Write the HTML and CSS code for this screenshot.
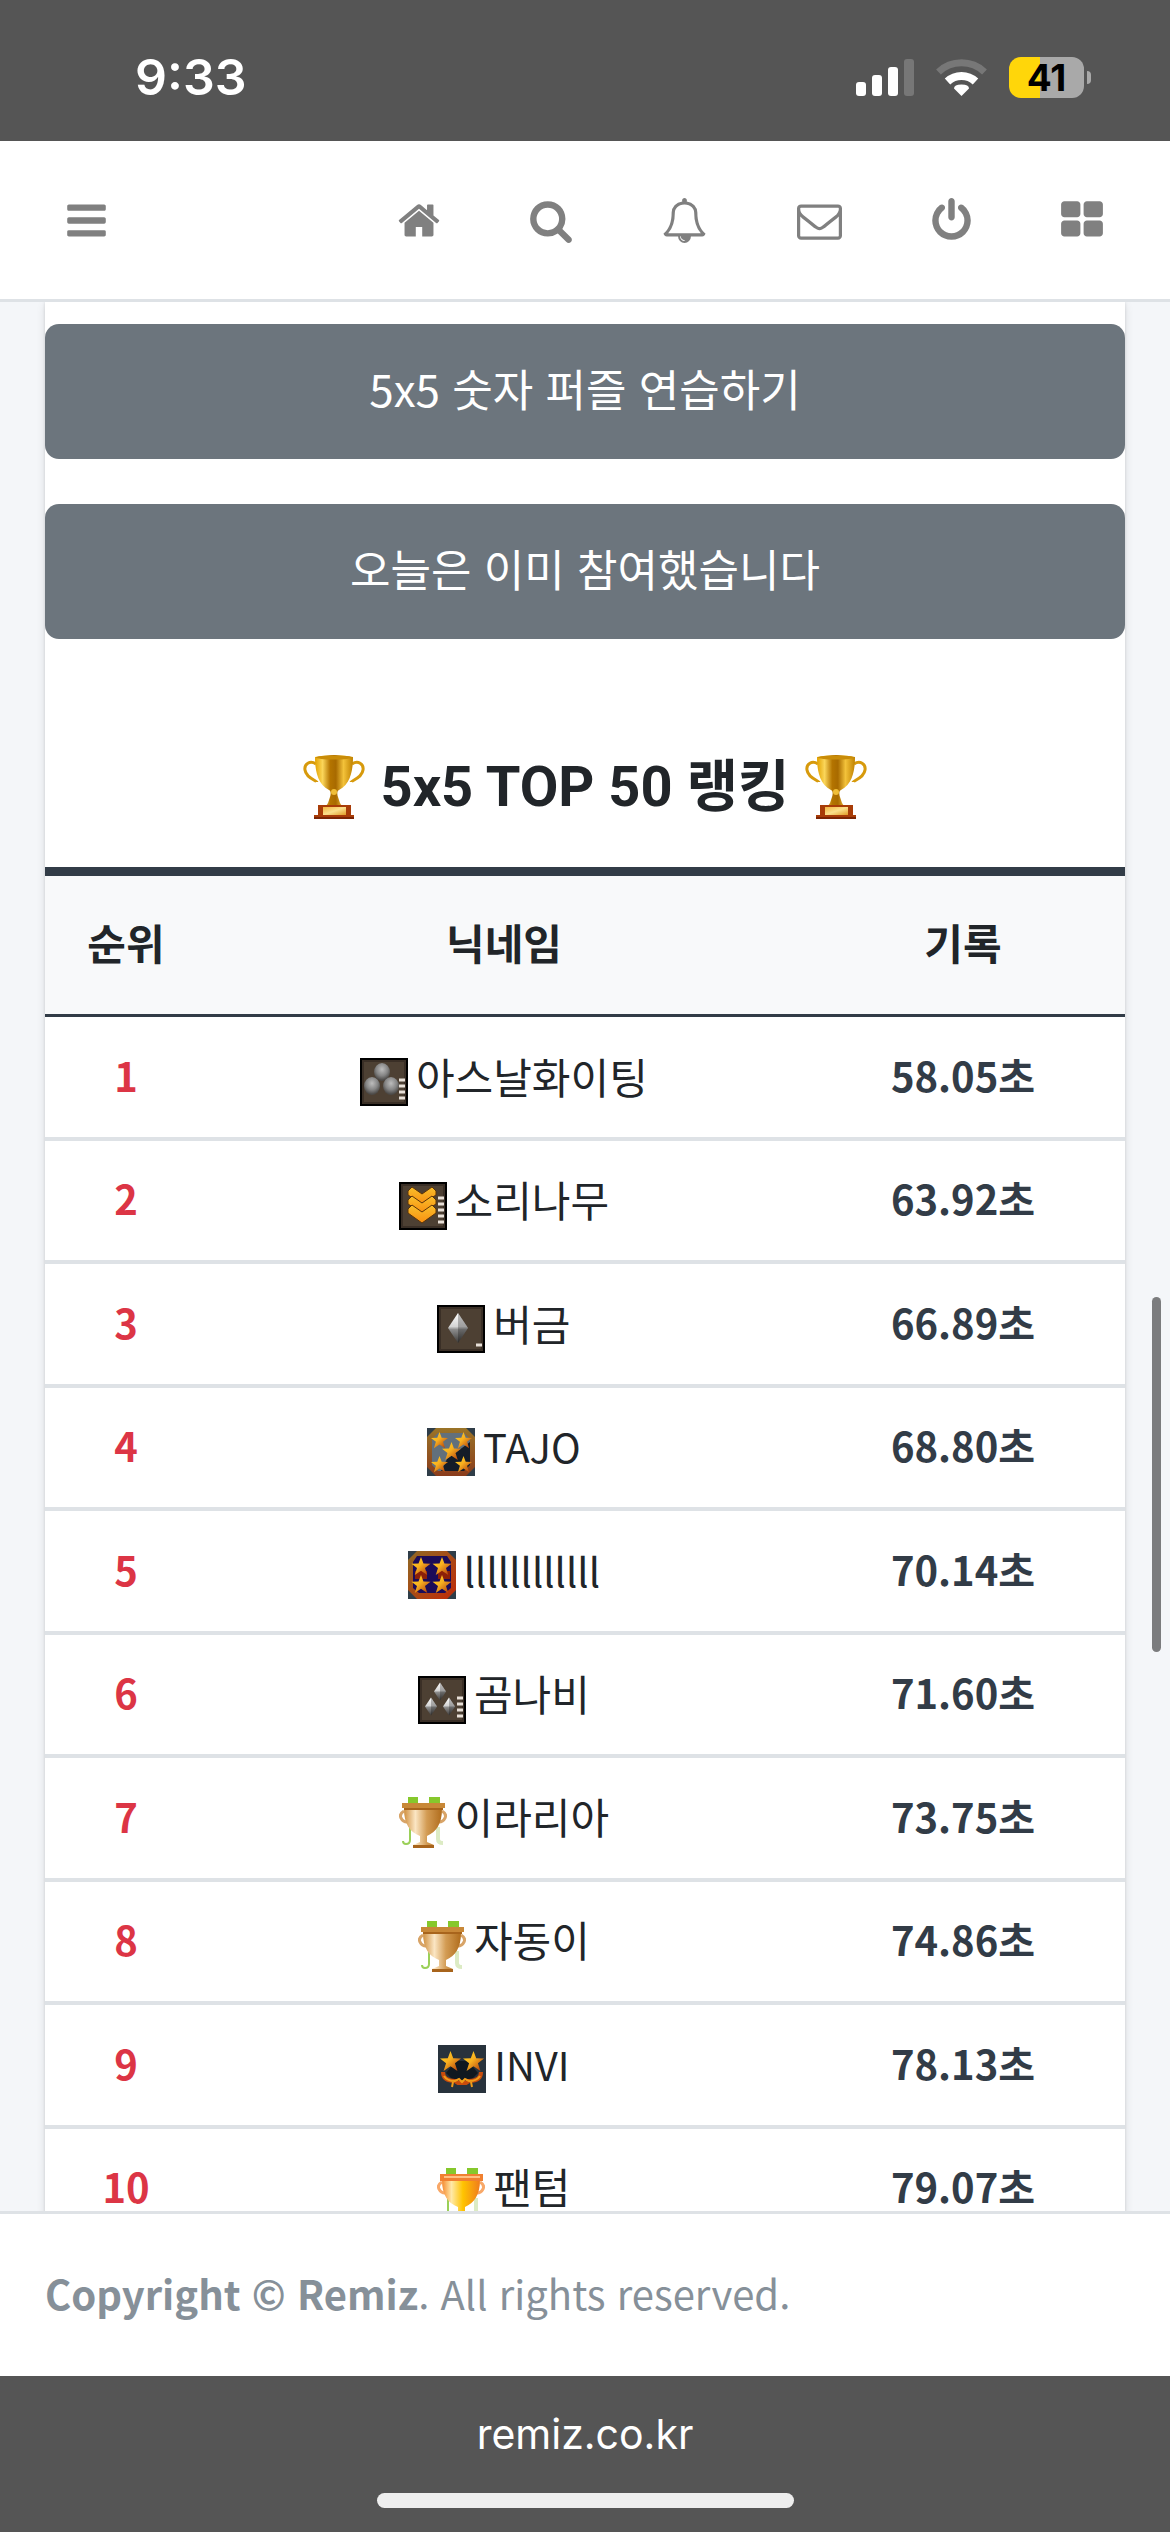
FILE: index.html
```html
<!DOCTYPE html>
<html lang="ko">
<head>
  <meta charset="UTF-8" />
  <meta name="viewport" content="width=device-width, initial-scale=1.0"/>
  <title>Remiz</title>
  <link rel="stylesheet" href="styles.css">
</head>
<body>
  <svg class="defs" aria-hidden="true">
    <defs>
      <radialGradient id="rock" cx="50%" cy="35%" r="60%">
        <stop offset="0" stop-color="#bdbdbd"/>
        <stop offset="0.6" stop-color="#858585"/>
        <stop offset="1" stop-color="#4c4a48"/>
      </radialGradient>
      <linearGradient id="chevron" x1="0" y1="0" x2="0" y2="1">
        <stop offset="0" stop-color="#f8c02c"/>
        <stop offset="1" stop-color="#f98e10"/>
      </linearGradient>
      <linearGradient id="gem" x1="0" y1="0" x2="0" y2="1">
        <stop offset="0" stop-color="#ffffff"/>
        <stop offset="0.45" stop-color="#d4d4d4"/>
        <stop offset="0.55" stop-color="#8c8c8c"/>
        <stop offset="1" stop-color="#3c3a38"/>
      </linearGradient>
      <linearGradient id="star" x1="0" y1="0" x2="1" y2="1">
        <stop offset="0" stop-color="#ffd21c"/>
        <stop offset="0.45" stop-color="#f8b020"/>
        <stop offset="1" stop-color="#a82c08"/>
      </linearGradient>
      <linearGradient id="frame" x1="0" y1="0" x2="0" y2="1">
        <stop offset="0" stop-color="#9a7428"/>
        <stop offset="1" stop-color="#8a3c1c"/>
      </linearGradient>
      <linearGradient id="frameRed" x1="0" y1="0" x2="1" y2="1">
        <stop offset="0" stop-color="#8f6a24"/>
        <stop offset="1" stop-color="#c02a08"/>
      </linearGradient>
      <linearGradient id="bronze" x1="0" y1="0" x2="1" y2="0">
        <stop offset="0" stop-color="#d09040"/>
        <stop offset="0.3" stop-color="#fbe6c4"/>
        <stop offset="0.6" stop-color="#d39c54"/>
        <stop offset="1" stop-color="#b06c1c"/>
      </linearGradient>
      <linearGradient id="amber" x1="0" y1="0" x2="1" y2="0">
        <stop offset="0" stop-color="#f58a30"/>
        <stop offset="0.25" stop-color="#ffe9a8"/>
        <stop offset="0.55" stop-color="#ffc400"/>
        <stop offset="1" stop-color="#f07c1c"/>
      </linearGradient>
      <linearGradient id="gold" x1="0" y1="0" x2="1" y2="0">
        <stop offset="0" stop-color="#e2a200"/>
        <stop offset="0.2" stop-color="#fbd65a"/>
        <stop offset="0.4" stop-color="#b47400"/>
        <stop offset="0.55" stop-color="#a86a00"/>
        <stop offset="0.75" stop-color="#f3c23a"/>
        <stop offset="1" stop-color="#c08200"/>
      </linearGradient>
      <linearGradient id="plate" x1="0" y1="0" x2="1" y2="1">
        <stop offset="0" stop-color="#f2b440"/>
        <stop offset="0.5" stop-color="#fbe08c"/>
        <stop offset="1" stop-color="#e09c28"/>
      </linearGradient>
    </defs>
    <symbol id="s-star" viewBox="0 0 20 20">
      <path fill="url(#star)" d="M10 0l2.600 6.800 7.400.3-5.800 4.500 2.400 7.400-6.600-4.400-6.600 4.400 2.400-7.400L0 7.100l7.400-.3z"/>
    </symbol>
    <symbol id="s-gem" viewBox="0 0 20 30">
      <path fill="url(#gem)" d="M10 0l10 15-10 15L0 15z"/>
      <path fill="#000" fill-opacity=".25" d="M10 0l10 15-10 15z"/>
    </symbol>
    <symbol id="s-box" viewBox="0 0 48 48">
      <path fill="#000" d="M0 0h48v48H0z"/>
      <path fill="#3a2f26" d="M2 2h44v44H2z"/>
      <path fill="#4d4033" d="M4 4h40v40H4z"/>
    </symbol>
    <symbol id="s-trophy" viewBox="0 0 62 64">
      <path fill="none" stroke="#d79a0c" stroke-width="3" d="M13 9C7 5 1 9 2 15c1 8 12 11 12 12M49 9c6-4 12 0 11 6-1 8-12 11-12 12"/>
      <path fill="url(#gold)" d="M12 2q19-4 38 0c0 12-2 27-14 33-2 1-2 4-1 7l2 6 2 3H23l2-3 2-6c1-3 1-6-1-7C14 29 12 14 12 2z"/>
      <ellipse cx="31" cy="2.500" rx="18" ry="2" fill="#c98c08"/>
      <circle cx="31" cy="37" r="3" fill="#f0be38"/>
      <path fill="#a83c08" d="M15 50h33v10h3v4H11v-4h4z"/>
      <path fill="#7c2404" d="M11 62h40v2H11z"/>
      <path fill="url(#plate)" d="M20 52h23v8H20z"/>
    </symbol>
  </svg>

  <div class="status-bar">
    <span class="clock">9:33</span>
    <div class="indicators">
      <svg width="58" height="37" viewBox="0 0 58 37" fill="#fff" aria-label="signal">
        <rect x="0" y="23" width="10" height="14" rx="3"/>
        <rect x="16" y="16" width="10" height="21" rx="3"/>
        <rect x="32" y="8" width="10" height="29" rx="3"/>
        <rect x="48" y="0" width="10" height="37" rx="3" fill="#777"/>
      </svg>
      <svg width="51" height="37" viewBox="0 0 51 37" fill="none" stroke-width="8" aria-label="wifi">
        <path stroke="#777" stroke-width="7" d="M2.500 13a33.500 33.500 0 0 1 46 0"/>
        <path stroke="#fff" d="M11.500 22.500a20.500 20.500 0 0 1 28 0"/>
        <path fill="#fff" d="M25.500 37l-7.500-7.500q0-4 7.500-4t7.500 4z"/>
      </svg>
      <div class="battery"><span class="level">41</span></div>
    </div>
  </div>

  <nav class="navbar">
    <a href="#" class="nav-link" aria-label="menu">
      <svg width="39" height="45" viewBox="128 0 1536 1792"><path d="M1664 1344v128q0 26-19 45t-45 19h-1408q-26 0-45-19t-19-45v-128q0-26 19-45t45-19h1408q26 0 45 19t19 45zm0-512v128q0 26-19 45t-45 19h-1408q-26 0-45-19t-19-45v-128q0-26 19-45t45-19h1408q26 0 45 19t19 45zm0-512v128q0 26-19 45t-45 19h-1408q-26 0-45-19t-19-45v-128q0-26 19-45t45-19h1408q26 0 45 19t19 45z"/></svg>
    </a>
    <div class="nav-right">
      <a href="#" class="nav-link" aria-label="home">
        <svg width="42" height="45" viewBox="64 0 1664 1792"><path d="M1472 992v480q0 26-19 45t-45 19h-384v-384h-256v384h-384q-26 0-45-19t-19-45v-480q0-1 .5-3t.5-3l575-474 575 474q1 2 1 6zm223-69l-62 74q-8 9-21 11h-3q-13 0-21-7l-692-577-692 577q-12 8-24 7-13-2-21-11l-62-74q-8-10-7-23.500t11-21.500l719-599q32-26 76-26t76 26l244 204v-195q0-14 9-23t23-9h192q14 0 23 9t9 23v408l219 182q10 8 11 21.500t-7 23.500z"/></svg>
      </a>
      <a href="#" class="nav-link" aria-label="search">
        <svg width="42" height="45" viewBox="64 0 1664 1792"><path d="M1216 832q0-185-131.500-316.500t-316.500-131.500-316.500 131.500-131.500 316.500 131.500 316.500 316.500 131.500 316.500-131.500 131.500-316.500zm512 832q0 52-38 90t-90 38q-54 0-90-38l-343-342q-179 124-399 124-143 0-273.500-55.500t-225-150-150-225-55.500-273.500 55.500-273.500 150-225 225-150 273.500-55.500 273.500 55.500 225 150 150 225 55.500 273.500q0 220-124 399l343 343q37 37 37 90z"/></svg>
      </a>
      <a href="#" class="nav-link" aria-label="alarm">
        <svg width="45" height="45" viewBox="0 0 1792 1792"><path d="M912 1696q0-16-16-16-59 0-101.500-42.500t-42.500-101.500q0-16-16-16t-16 16q0 73 51.500 124.500t124.500 51.500q16 0 16-16zm-666-288h1300q-266-300-266-832 0-51-24-105t-69-103-121.500-80.500-169.500-31.500-169.500 31.500-121.500 80.500-69 103-24 105q0 532-266 832zm1482 0q0 52-38 90t-90 38h-448q0 106-75 181t-181 75-181-75-75-181h-448q-52 0-90-38t-38-90q50-42 91-88t85-119.500 74.500-158.500 50-206 19.500-260q0-152 117-282.500t307-158.500q-8-19-8-39 0-40 28-68t68-28 68 28 28 68q0 20-8 39 190 28 307 158.500t117 282.500q0 139 19.500 260t50 206 74.500 158.500 85 119.500 91 88z"/></svg>
      </a>
      <a href="#" class="nav-link" aria-label="message">
        <svg width="45" height="45" viewBox="0 0 1792 1792"><path d="M1664 1504v-768q-32 36-69 66-268 206-426 338-51 43-83 67t-86.500 48.500-102.500 24.500h-2q-48 0-102.500-24.500t-86.500-48.500-83-67q-158-132-426-338-37-30-69-66v768q0 13 9.500 22.500t22.500 9.500h1472q13 0 22.500-9.500t9.500-22.500zm0-1051v-24.500l-.5-13-3-12.500-5.500-9-9-7.500-14-2.500h-1472q-13 0-22.500 9.500t-9.500 22.500q0 168 147 284 193 152 401 317 6 5 35 29.500t46 37.500 44.500 31.500 50.500 27.500 43 9h2q20 0 43-9t50.500-27.500 44.500-31.500 46-37.500 35-29.500q208-165 401-317 54-43 100.500-115.500t46.500-131.500zm128-37v1088q0 66-47 113t-113 47h-1472q-66 0-113-47t-47-113v-1088q0-66 47-113t113-47h1472q66 0 113 47t47 113z"/></svg>
      </a>
      <a href="#" class="nav-link" aria-label="logout">
        <svg width="39" height="45" viewBox="128 0 1536 1792"><path d="M1664 896q0 156-61 298t-164 245-245 164-298 61-298-61-245-164-164-245-61-298q0-182 80.500-343t226.500-270q43-32 95.500-25t83.500 50q32 42 24.500 94.500t-49.500 84.500q-98 74-151.500 181t-53.500 228q0 104 40.500 198.500t109.500 163.500 163.500 109.500 198.500 40.500 198.500-40.500 163.500-109.500 109.500-163.500 40.500-198.500q0-121-53.500-228t-151.500-181q-42-32-49.500-84.500t24.500-94.500q31-43 84-50t95 25q146 109 226.500 270t80.500 343zm-640-768v640q0 52-38 90t-90 38-90-38-38-90v-640q0-52 38-90t90-38 90 38 38 90z"/></svg>
      </a>
      <a href="#" class="nav-link" aria-label="widgets">
        <svg width="42" height="45" viewBox="64 0 1664 1792"><path d="M832 1024v384q0 52-38 90t-90 38h-512q-52 0-90-38t-38-90v-384q0-52 38-90t90-38h512q52 0 90 38t38 90zm0-768v384q0 52-38 90t-90 38h-512q-52 0-90-38t-38-90v-384q0-52 38-90t90-38h512q52 0 90 38t38 90zm896 768v384q0 52-38 90t-90 38h-512q-52 0-90-38t-38-90v-384q0-52 38-90t90-38h512q52 0 90 38t38 90zm0-768v384q0 52-38 90t-90 38h-512q-52 0-90-38t-38-90v-384q0-52 38-90t90-38h512q52 0 90 38t38 90z"/></svg>
      </a>
    </div>
  </nav>

  <main class="content">
    <div class="card">
      <div class="actions">
        <button type="button" class="btn">5x5 숫자 퍼즐 연습하기</button>
        <button type="button" class="btn">오늘은 이미 참여했습니다</button>
      </div>

      <h2 class="title">
        <svg class="trophy" width="62" height="64"><use href="#s-trophy"/></svg>
        <span>5x5 TOP 50 랭킹</span>
        <svg class="trophy" width="62" height="64"><use href="#s-trophy"/></svg>
      </h2>

      <table class="ranking">
        <thead>
          <tr><th class="col-rank">순위</th><th class="col-name">닉네임</th><th class="col-time">기록</th></tr>
        </thead>
        <tbody>
          <tr>
            <td class="rank">1</td>
            <td>
              <svg class="badge" width="48" height="48" viewBox="0 0 48 48">
                <use href="#s-box"/>
                <ellipse cx="22" cy="14" rx="8" ry="9" fill="url(#rock)"/>
                <ellipse cx="12" cy="28" rx="8" ry="9" fill="url(#rock)"/>
                <ellipse cx="31" cy="28" rx="8" ry="9" fill="url(#rock)"/>
                <path stroke="#e8e0d8" stroke-width="3" d="M39 22h6M39 28h6M39 34h6M39 40h6"/>
              </svg>
              아스날화이팅
            </td>
            <td class="time">58.05초</td>
          </tr>
          <tr>
            <td class="rank">2</td>
            <td>
              <svg class="badge" width="48" height="48" viewBox="0 0 48 48">
                <use href="#s-box"/>
                <g fill="url(#chevron)" stroke="#5c3408" stroke-width="1">
                  <path d="M9 9l4-4 10 7 10-7 4 4v4l-14 9-14-9z"/>
                  <path d="M9 18l4-4 10 7 10-7 4 4v4l-14 9-14-9z"/>
                  <path d="M9 27l4-4 10 7 10-7 4 4v4L23 41 9 31z"/>
                </g>
                <path stroke="#e8e0d8" stroke-width="3" d="M39 16h6M39 22h6M39 28h6M39 34h6M39 40h6"/>
              </svg>
              소리나무
            </td>
            <td class="time">63.92초</td>
          </tr>
          <tr>
            <td class="rank">3</td>
            <td>
              <svg class="badge" width="48" height="48" viewBox="0 0 48 48">
                <use href="#s-box"/>
                <use href="#s-gem" x="11" y="8" width="20" height="30"/>
                <path stroke="#e8e0d8" stroke-width="3" d="M39 40h6"/>
              </svg>
              버금
            </td>
            <td class="time">66.89초</td>
          </tr>
          <tr>
            <td class="rank">4</td>
            <td>
              <svg class="badge" width="48" height="48" viewBox="0 0 48 48">
                <path fill="#2f3d48" d="M0 0h48v48H0z"/>
                <path fill="url(#frame)" d="M9 0h30l9 9v30l-9 9H9l-9-9V9z"/>
                <path fill="#62707c" d="M11 5h26l6 6v13L24 43H11l-6-6V11z"/>
                <path fill="#141c28" d="M43 14v23l-6 6H14l6-12z"/>
                <use href="#s-star" x="4" y="4" width="17" height="17"/>
                <use href="#s-star" x="28" y="4" width="17" height="17"/>
                <use href="#s-star" x="15" y="14" width="19" height="19"/>
                <use href="#s-star" x="4" y="28" width="17" height="17"/>
                <use href="#s-star" x="28" y="28" width="17" height="17"/>
              </svg>
              <span class="latin">TAJO</span>
            </td>
            <td class="time">68.80초</td>
          </tr>
          <tr>
            <td class="rank">5</td>
            <td>
              <svg class="badge" width="48" height="48" viewBox="0 0 48 48">
                <path fill="#2f3d48" d="M0 0h48v48H0z"/>
                <path fill="url(#frameRed)" d="M9 0h30l9 9v30l-9 9H9l-9-9V9z"/>
                <path fill="#1c0c58" d="M9 5h30l4 6v26l-6 5H11l-6-5V11z"/>
                <path fill="#8c2008" d="M7 20h12v8H7zM30 20h12v8H30z"/>
                <use href="#s-star" x="3" y="6" width="20" height="19"/>
                <use href="#s-star" x="24" y="6" width="20" height="19"/>
                <use href="#s-star" x="3" y="24" width="20" height="19"/>
                <use href="#s-star" x="24" y="24" width="20" height="19"/>
              </svg>
              <span class="latin">llllllllllll</span>
            </td>
            <td class="time">70.14초</td>
          </tr>
          <tr>
            <td class="rank">6</td>
            <td>
              <svg class="badge" width="48" height="48" viewBox="0 0 48 48">
                <use href="#s-box"/>
                <use href="#s-gem" x="16" y="6" width="12" height="19"/>
                <use href="#s-gem" x="7" y="21" width="12" height="19"/>
                <use href="#s-gem" x="25" y="21" width="12" height="19"/>
                <path stroke="#e8e0d8" stroke-width="3" d="M39 22h6M39 28h6M39 34h6M39 40h6"/>
              </svg>
              곰나비
            </td>
            <td class="time">71.60초</td>
          </tr>
          <tr>
            <td class="rank">7</td>
            <td>
              <svg class="badge" width="48" height="51" viewBox="0 0 48 51">
                <path fill="#86c82c" d="M9 0h10v7H9zM30 0h11v7H30z"/>
                <path fill="none" stroke="#9ad058" stroke-width="2" d="M11 30v13q0 4-4 4-3 0-3-3"/>
                <path fill="none" stroke="#dcebc4" stroke-width="4" d="M39 30v12q0 4 5 4"/>
                <path fill="none" stroke="#d8a468" stroke-width="3" d="M5 14q-5 3-3 7 2 4 6 4M43 14q5 3 3 7-2 4-6 4"/>
                <path fill="url(#bronze)" d="M5 12h38c0 15-6 23-15 27v6l7 3v3H14v-3l7-3v-6C11 35 5 27 5 12z"/>
                <path fill="#c88838" d="M3 6h43v5H3z"/>
                <path fill="#a8641c" d="M5 11h39v2H5zM14 48h21v3H14z"/>
              </svg>
              이라리아
            </td>
            <td class="time">73.75초</td>
          </tr>
          <tr>
            <td class="rank">8</td>
            <td>
              <svg class="badge" width="48" height="51" viewBox="0 0 48 51">
                <path fill="#86c82c" d="M9 0h10v7H9zM30 0h11v7H30z"/>
                <path fill="none" stroke="#9ad058" stroke-width="2" d="M11 30v13q0 4-4 4-3 0-3-3"/>
                <path fill="none" stroke="#dcebc4" stroke-width="4" d="M39 30v12q0 4 5 4"/>
                <path fill="none" stroke="#d8a468" stroke-width="3" d="M5 14q-5 3-3 7 2 4 6 4M43 14q5 3 3 7-2 4-6 4"/>
                <path fill="url(#bronze)" d="M5 12h38c0 15-6 23-15 27v6l7 3v3H14v-3l7-3v-6C11 35 5 27 5 12z"/>
                <path fill="#c88838" d="M3 6h43v5H3z"/>
                <path fill="#a8641c" d="M5 11h39v2H5zM14 48h21v3H14z"/>
              </svg>
              자동이
            </td>
            <td class="time">74.86초</td>
          </tr>
          <tr>
            <td class="rank">9</td>
            <td>
              <svg class="badge" width="48" height="48" viewBox="0 0 48 48">
                <path fill="#28323c" d="M0 0h48v48H0z"/>
                <path fill="#101820" d="M18 16h12l10 12-8 8H16l-8-8z"/>
                <path fill="none" stroke="#c84c0c" stroke-width="4" d="M5 27q0 9 12 9l3 2h8l3-2q12 0 12-9"/>
                <path fill="none" stroke="#f09c18" stroke-width="2" d="M6 31q3 5 11 5l4-2 3 3 3-3 4 2q8 0 11-5M15 37l-1 5M33 37l1 5"/>
                <use href="#s-star" x="2" y="6" width="21" height="21"/>
                <use href="#s-star" x="25" y="6" width="21" height="21"/>
              </svg>
              <span class="latin">INVI</span>
            </td>
            <td class="time">78.13초</td>
          </tr>
          <tr>
            <td class="rank">10</td>
            <td>
              <svg class="badge" width="48" height="51" viewBox="0 0 48 51">
                <path fill="#86c82c" d="M9 0h10v7H9zM30 0h11v7H30z"/>
                <path fill="none" stroke="#9ad058" stroke-width="2" d="M11 30v13q0 4-4 4-3 0-3-3"/>
                <path fill="none" stroke="#dcebc4" stroke-width="4" d="M39 30v12q0 4 5 4"/>
                <path fill="none" stroke="#f8a868" stroke-width="3" d="M5 14q-5 3-3 7 2 4 6 4M43 14q5 3 3 7-2 4-6 4"/>
                <path fill="url(#amber)" d="M5 12h38c0 15-6 23-15 27v6l7 3v3H14v-3l7-3v-6C11 35 5 27 5 12z"/>
                <path fill="#f08030" d="M3 6h43v7H3z"/>
                <path fill="#ffc080" d="M7 8h36v2H7z"/>
              </svg>
              팬텀
            </td>
            <td class="time">79.07초</td>
          </tr>
        </tbody>
      </table>
    </div>
    <div class="scroll-thumb"></div>
  </main>

  <footer class="footer">
    <p><strong>Copyright © Remiz</strong>. All rights reserved.</p>
  </footer>

  <div class="address-bar">
    <span>remiz.co.kr</span>
    <div class="home-indicator"></div>
  </div>
</body>
</html>
```
FILE: styles.css
```css
:root {
  --navy: #323c47;
  --text: #212529;
  --muted: #869099;
  --line: #dee2e6;
  --bg: #f4f6f9;
  --secondary: #6c757d;
  --danger: #dc3545;
  --chrome: #555555;
}

* {
  box-sizing: border-box;
}

body {
  margin: 0;
  height: 100vh;
  display: flex;
  flex-direction: column;
  font-family: "Noto Sans CJK KR", sans-serif;
  font-size: 42px;
  line-height: 63px;
  color: var(--text);
  background: var(--bg);
}

.defs {
  position: absolute;
  width: 0;
  height: 0;
}

.status-bar {
  flex: none;
  height: 141px;
  padding: 14px 79px 0 135px;
  display: flex;
  align-items: center;
  justify-content: space-between;
  background: var(--chrome);
  color: #fff;
  font-family: Inter, sans-serif;
}

.clock {
  font-size: 50px;
  font-weight: 600;
}

.indicators {
  display: flex;
  align-items: center;
  gap: 22px;
}

.battery {
  display: flex;
  align-items: center;
  gap: 3px;
}

.battery::after {
  content: "";
  width: 4px;
  height: 13px;
  border-radius: 0 4px 4px 0;
  background: #a9a9a9;
}

.level {
  width: 75px;
  line-height: 41px;
  border-radius: 12px;
  background: linear-gradient(to right, #ffd60a 41%, #a9a9a9 41%);
  color: #000;
  font-size: 37px;
  font-weight: 700;
  text-align: center;
}

.navbar {
  flex: none;
  height: 161px;
  padding: 0 22px;
  display: flex;
  align-items: center;
  justify-content: space-between;
  background: #fff;
  border-bottom: 3px solid var(--line);
}

.nav-right {
  display: flex;
}

.nav-link {
  padding: 24px 45px;
}

.nav-link svg {
  display: block;
  fill: #808080;
}

.content {
  position: relative;
  flex: 1;
  min-height: 0;
  overflow: hidden;
  padding: 0 45px;
}

.card {
  padding-top: 22px;
  background: #fff;
  box-shadow: 0 0 3px rgba(0, 0, 0, 0.12), 0 3px 9px rgba(0, 0, 0, 0.1);
}

.actions {
  display: flex;
  flex-direction: column;
  gap: 45px;
}

.btn {
  width: 100%;
  height: 135px;
  padding: 0 0 8px;
  border: none;
  border-radius: 14px;
  background: var(--secondary);
  color: #fff;
  font-family: inherit;
  font-size: 44px;
  cursor: pointer;
}

.title {
  margin: 0;
  padding: 108px 0 40px;
  display: flex;
  align-items: center;
  justify-content: center;
  gap: 16px;
  font-family: Roboto, "Noto Sans CJK KR", sans-serif;
  font-size: 56px;
  line-height: 80px;
  font-weight: 700;
}

.ranking {
  width: 100%;
  table-layout: fixed;
  border-spacing: 0;
  border-top: 9px solid var(--navy);
  text-align: center;
}

.ranking th {
  height: 141px;
  padding: 0 0 8px;
  background: #f8f9fa;
  border-bottom: 3px solid var(--navy);
}

.ranking td {
  height: 124px;
  padding: 0 0 4px;
  border-bottom: 4px solid var(--line);
}

.ranking tr:nth-child(even) td {
  height: 123px;
}

.col-rank {
  width: 15%;
}

.col-name {
  width: 55%;
}

.col-time {
  width: 30%;
}

.rank,
.time {
  font-size: 40px;
  font-weight: 700;
}

.rank {
  color: var(--danger);
}

.time {
  color: var(--navy);
}

.latin {
  font-size: 40px;
}

.badge {
  margin-right: -4px;
  vertical-align: middle;
}

.scroll-thumb {
  position: absolute;
  top: 995px;
  right: 9px;
  width: 9px;
  height: 355px;
  border-radius: 5px;
  background: #7b7c7e;
}

.footer {
  flex: none;
  height: 165px;
  padding: 0 45px 4px;
  display: flex;
  align-items: center;
  background: #fff;
  border-top: 3px solid var(--line);
  color: var(--muted);
  font-size: 40px;
}

.footer p {
  margin: 0;
}

.address-bar {
  flex: none;
  height: 156px;
  padding: 27px 0 24px;
  display: flex;
  flex-direction: column;
  align-items: center;
  justify-content: space-between;
  background: var(--chrome);
  color: #fff;
  font-family: Inter, sans-serif;
  font-size: 41px;
}

.home-indicator {
  width: 417px;
  height: 15px;
  border-radius: 8px;
  background: #eee;
}
```
